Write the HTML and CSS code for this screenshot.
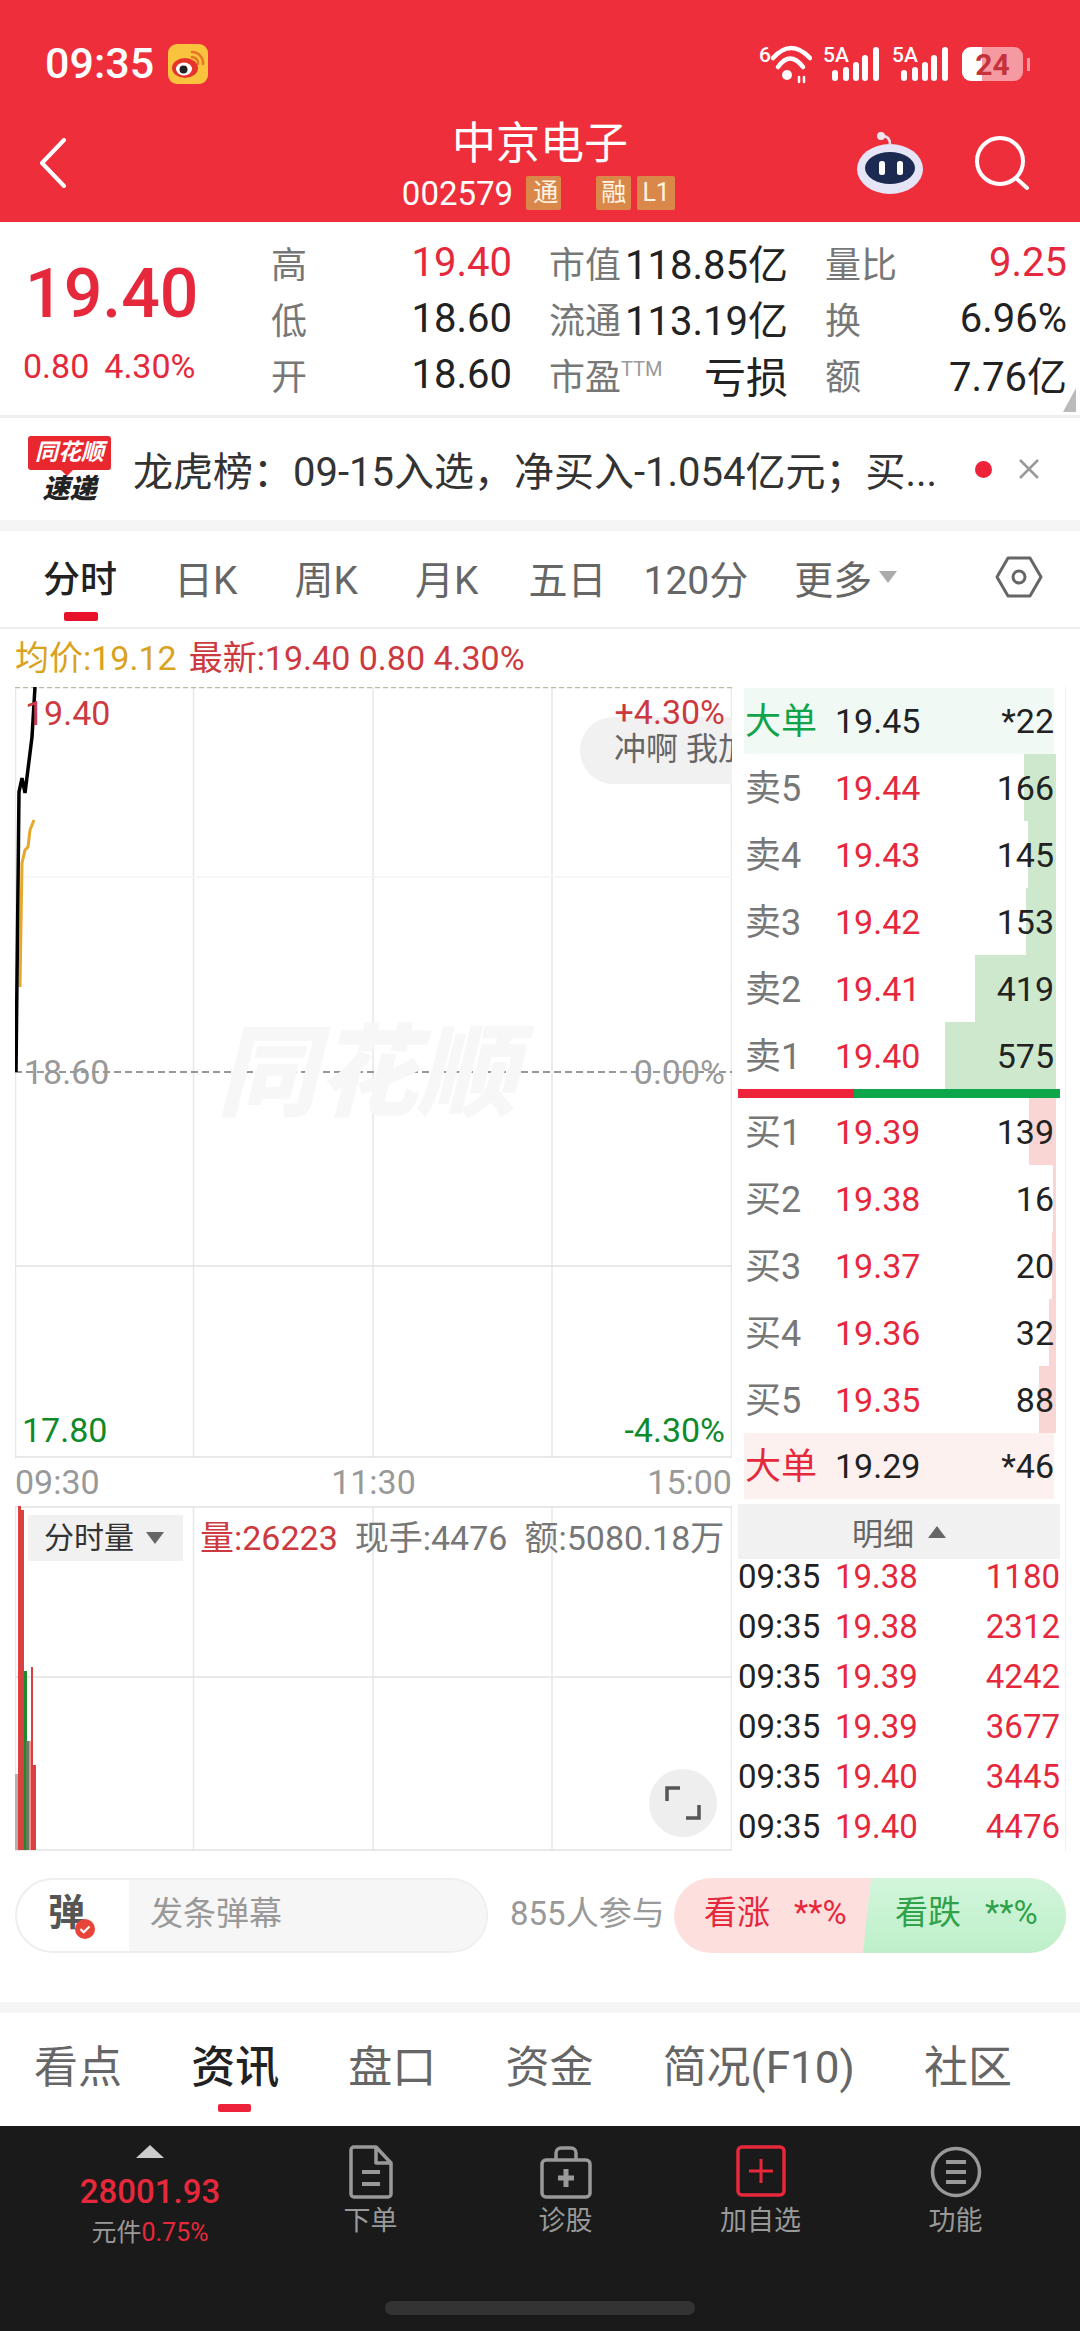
FILE: index.html
```html
<!DOCTYPE html>
<html>
<head>
    <title>中京电子</title>
    <link rel="stylesheet" href="styles.css">
</head>
<body>
<div class="app">
    <header class="header">
        <div class="status">
            <div class="status-left">
                <span class="clock">09:35</span>
                <svg class="weibo" viewBox="0 0 40 40">
                    <rect width="40" height="40" rx="9" fill="#f9c33d"/>
                    <ellipse cx="17" cy="24" rx="13" ry="10" fill="#e6342c"/>
                    <ellipse cx="16" cy="25" rx="8" ry="6.5" fill="#fff"/>
                    <circle cx="15.5" cy="25.5" r="4" fill="#222"/>
                    <path d="M24 8a11 11 0 0 1 11 12M24 13a6 6 0 0 1 6 7" fill="none" stroke="#e6742c" stroke-width="2.5" stroke-linecap="round"/>
                </svg>
            </div>
            <div class="status-right">
                <svg class="wifi" viewBox="0 0 54 42" fill="none" stroke="#fff" stroke-linecap="round">
                    <text x="1" y="20" class="net-text">6</text>
                    <path d="M15 16Q33 -4 52 16" stroke-width="4.5"/>
                    <path d="M20 25Q32 8 45 25" stroke-width="4.5"/>
                    <circle cx="29" cy="33" r="5" fill="#fff" stroke="none"/>
                    <path d="M41 35v5M46 35v5" stroke-width="2.5"/>
                </svg>
                <svg class="signal" viewBox="0 0 58 42" fill="#fff">
                    <text x="0" y="20" class="net-text">5A</text>
                    <rect x="9" y="28" width="6" height="11" rx="3"/>
                    <rect x="20" y="25" width="6" height="14" rx="3"/>
                    <rect x="30" y="20" width="6" height="19" rx="3"/>
                    <rect x="39" y="13" width="6" height="26" rx="3"/>
                    <rect x="50" y="5" width="6" height="34" rx="3"/>
                </svg>
                <svg class="signal" viewBox="0 0 58 42" fill="#fff">
                    <text x="0" y="20" class="net-text">5A</text>
                    <rect x="9" y="28" width="6" height="11" rx="3"/>
                    <rect x="20" y="25" width="6" height="14" rx="3"/>
                    <rect x="30" y="20" width="6" height="19" rx="3"/>
                    <rect x="39" y="13" width="6" height="26" rx="3"/>
                    <rect x="50" y="5" width="6" height="34" rx="3"/>
                </svg>
                <div class="battery">
                    <span class="battery-fill"></span>
                    <span class="battery-num">24</span>
                </div>
                <span class="battery-cap"></span>
            </div>
        </div>
        <div class="nav">
            <svg class="back" viewBox="0 0 30 50" fill="none" stroke="#fff" stroke-width="4" stroke-linecap="round" stroke-linejoin="round"><path d="M26 2 L4 25 L26 48"/></svg>
            <div class="title-box">
                <div class="title">中京电子</div>
                <div class="code-line">
                    <span class="code">002579</span>
                    <span class="tag tag-clip"><span>通</span></span>
                    <span class="tag tag-far">融</span>
                    <span class="tag tag-l1">L1</span>
                </div>
            </div>
            <svg class="robot" viewBox="0 0 68 62">
                <path d="M34 12q0-8-8-8" fill="none" stroke="#e8dcef" stroke-width="2.5"/>
                <circle cx="25" cy="4" r="4" fill="#f2e6ee"/>
                <ellipse cx="34" cy="37" rx="33" ry="25" fill="#e6e4f7"/>
                <ellipse cx="34" cy="36" rx="25" ry="16" fill="#1c2a52"/>
                <rect x="23" y="29" width="6" height="14" rx="2.5" fill="#fff"/>
                <rect x="41" y="29" width="6" height="14" rx="2.5" fill="#fff"/>
            </svg>
            <svg class="search" viewBox="0 0 56 56" fill="none" stroke="#fff" stroke-width="4" stroke-linecap="round"><circle cx="26" cy="26" r="23"/><path d="M43 44l10 9"/></svg>
        </div>
    </header>

    <section class="quote">
        <div class="last">
            <div class="last-price">19.40</div>
            <div class="last-change"><span>0.80</span><span>4.30%</span></div>
        </div>
        <div class="stats">
            <div class="stat"><span class="lbl">高</span><span class="val red">19.40</span></div>
            <div class="stat"><span class="lbl">市值</span><span class="val">118.85亿</span></div>
            <div class="stat"><span class="lbl">量比</span><span class="val red">9.25</span></div>
            <div class="stat"><span class="lbl">低</span><span class="val">18.60</span></div>
            <div class="stat"><span class="lbl">流通</span><span class="val">113.19亿</span></div>
            <div class="stat"><span class="lbl">换</span><span class="val">6.96%</span></div>
            <div class="stat"><span class="lbl">开</span><span class="val">18.60</span></div>
            <div class="stat"><span class="lbl">市盈<sup class="ttm">TTM</sup></span><span class="val val-big">亏损</span></div>
            <div class="stat"><span class="lbl">额</span><span class="val">7.76亿</span></div>
        </div>
        <span class="corner"></span>
    </section>

    <section class="news">
        <div class="news-logo">
            <div class="news-logo-top">同花顺</div>
            <div class="news-logo-bottom">速递</div>
        </div>
        <div class="news-text">龙虎榜：09-15入选，净买入-1.054亿元；买...</div>
        <span class="news-dot"></span>
        <svg class="news-close" viewBox="0 0 22 22" fill="none" stroke="#999" stroke-width="2.5"><path d="M2 2l18 18M20 2L2 20"/></svg>
    </section>

    <nav class="period-tabs">
        <span class="period active">分时</span>
        <span class="period">日K</span>
        <span class="period">周K</span>
        <span class="period">月K</span>
        <span class="period period-five">五日</span>
        <span class="period period-num">120分</span>
        <span class="period period-more">更多<i class="more-arrow"></i></span>
        <svg class="hex" viewBox="0 0 48 42" fill="none" stroke="#666" stroke-width="3"><path d="M13 2H35L46 21L35 40H13L2 21Z" stroke-linejoin="round"/><circle cx="24" cy="21" r="6"/></svg>
    </nav>

    <div class="legend">
        <span class="gold">均价:19.12</span>
        <span class="legend-red">最新:19.40 0.80 4.30%</span>
    </div>

    <div class="panels">
        <div class="charts">
            <div class="price-chart">
                <svg class="chart-svg" viewBox="0 0 717 771">
                    <path d="M0.5 0V771M178.5 0V771M358 0V771M537 0V771M716.5 0V771" stroke="#e8e8e8" stroke-width="1.5" fill="none"/>
                    <path d="M0 579H717M0 770H717" stroke="#e2e2e2" stroke-width="1.5" fill="none"/>
                    <path d="M0 190H717" stroke="#f5f5f5" stroke-width="1.5" fill="none"/>
                    <path d="M0 0.5H717" stroke="#bdb8a5" stroke-width="1.5" stroke-dasharray="5 3" fill="none"/>
                    <path d="M0 385H717" stroke="#777" stroke-width="1.5" stroke-dasharray="7 4" fill="none"/>
                    <path d="M5 300L7 176L10 163L13 160L15 143L19 133" stroke="#e3a82c" stroke-width="3" fill="none"/>
                    <path d="M1 385L4 105L7 91L10 106L17 50L20 0" stroke="#000" stroke-width="3.5" fill="none"/>
                </svg>
                <div class="watermark">同花顺</div>
                <div class="bullet">冲啊 我加</div>
                <span class="axis-label top-left chart-red">19.40</span>
                <span class="axis-label top-right chart-red">+4.30%</span>
                <span class="axis-label mid-left chart-grey">18.60</span>
                <span class="axis-label mid-right chart-grey">0.00%</span>
                <span class="axis-label low-left chart-green">17.80</span>
                <span class="axis-label low-right chart-green">-4.30%</span>
            </div>
            <div class="time-axis"><span>09:30</span><span>11:30</span><span>15:00</span></div>
            <div class="volume-chart">
                <svg class="chart-svg" viewBox="0 0 717 345">
                    <path d="M0.5 0V345M178.5 0V345M358 0V345M537 0V345M716.5 0V345" stroke="#e8e8e8" stroke-width="1.5" fill="none"/>
                    <path d="M0 1H717M0 171H717M0 344H717" stroke="#e2e2e2" stroke-width="1.5" fill="none"/>
                    <rect x="0" y="268" width="3" height="76" fill="#b5b0ae"/>
                    <rect x="3" y="0" width="3" height="344" fill="#d9403f"/>
                    <rect x="5" y="4" width="4" height="340" fill="#d9403f"/>
                    <rect x="9" y="165" width="3" height="179" fill="#1e8a2e"/>
                    <rect x="11" y="235" width="3" height="109" fill="#6c7a5e"/>
                    <rect x="14" y="235" width="2" height="109" fill="#f78a8a"/>
                    <rect x="16" y="161" width="2" height="183" fill="#d9403f"/>
                    <rect x="18" y="259" width="3" height="85" fill="#d9403f"/>
                </svg>
                <div class="vol-select">分时量<i class="vol-arrow"></i></div>
                <div class="vol-info">
                    <span class="chart-red">量:26223</span>
                    <span>现手:4476</span>
                    <span>额:5080.18万</span>
                </div>
                <div class="expand">
                    <svg viewBox="0 0 36 36" fill="none" stroke="#555" stroke-width="3.5"><path d="M2 16V3H15M34 20V33H21"/></svg>
                </div>
            </div>
        </div>

        <div class="book">
            <div class="book-big big-green"><span class="big-lbl">大单</span><span class="num">19.45</span><span class="qty">*22</span></div>
            <div class="book-row"><i class="depth depth-sell" style="width:32px"></i><span class="lbl">卖5</span><span class="num red">19.44</span><span class="qty">166</span></div>
            <div class="book-row"><i class="depth depth-sell" style="width:28px"></i><span class="lbl">卖4</span><span class="num red">19.43</span><span class="qty">145</span></div>
            <div class="book-row"><i class="depth depth-sell" style="width:30px"></i><span class="lbl">卖3</span><span class="num red">19.42</span><span class="qty">153</span></div>
            <div class="book-row"><i class="depth depth-sell" style="width:81px"></i><span class="lbl">卖2</span><span class="num red">19.41</span><span class="qty">419</span></div>
            <div class="book-row"><i class="depth depth-sell" style="width:111px"></i><span class="lbl">卖1</span><span class="num red">19.40</span><span class="qty">575</span></div>
            <div class="split"><span class="split-buy"></span><span class="split-sell"></span></div>
            <div class="book-row"><i class="depth depth-buy" style="width:27px"></i><span class="lbl">买1</span><span class="num red">19.39</span><span class="qty">139</span></div>
            <div class="book-row"><i class="depth depth-buy" style="width:3px"></i><span class="lbl">买2</span><span class="num red">19.38</span><span class="qty">16</span></div>
            <div class="book-row"><i class="depth depth-buy" style="width:4px"></i><span class="lbl">买3</span><span class="num red">19.37</span><span class="qty">20</span></div>
            <div class="book-row"><i class="depth depth-buy" style="width:7px"></i><span class="lbl">买4</span><span class="num red">19.36</span><span class="qty">32</span></div>
            <div class="book-row"><i class="depth depth-buy" style="width:17px"></i><span class="lbl">买5</span><span class="num red">19.35</span><span class="qty">88</span></div>
            <div class="book-big big-red"><span class="big-lbl">大单</span><span class="num">19.29</span><span class="qty">*46</span></div>
            <div class="detail-head">明细<i class="detail-arrow"></i></div>
            <div class="trades">
                <div class="trade"><span>09:35</span><span class="red">19.38</span><span class="red">1180</span></div>
                <div class="trade"><span>09:35</span><span class="red">19.38</span><span class="red">2312</span></div>
                <div class="trade"><span>09:35</span><span class="red">19.39</span><span class="red">4242</span></div>
                <div class="trade"><span>09:35</span><span class="red">19.39</span><span class="red">3677</span></div>
                <div class="trade"><span>09:35</span><span class="red">19.40</span><span class="red">3445</span></div>
                <div class="trade"><span>09:35</span><span class="red">19.40</span><span class="red">4476</span></div>
            </div>
        </div>
    </div>

    <div class="danmu-row">
        <div class="danmu-input">
            <div class="danmu-icon">弹<svg class="danmu-check" viewBox="0 0 20 20"><circle cx="10" cy="10" r="10" fill="#e8443a"/><path d="M5.5 10l3.2 3.2L14.5 7.5" fill="none" stroke="#fff" stroke-width="2.2"/></svg></div>
            <div class="danmu-hint">发条弹幕</div>
        </div>
        <span class="danmu-count">855人参与</span>
        <div class="vote">
            <span class="vote-bull">看涨<b>**%</b></span>
            <span class="vote-bear">看跌<b>**%</b></span>
        </div>
    </div>

    <nav class="info-tabs">
        <span>看点</span>
        <span class="active">资讯</span>
        <span>盘口</span>
        <span>资金</span>
        <span>简况(F10)</span>
        <span>社区</span>
    </nav>

    <footer class="footer">
        <div class="footer-items">
            <div class="index">
                <i class="index-arrow"></i>
                <div class="index-value">28001.93</div>
                <div class="index-sub">元件<span>0.75%</span></div>
            </div>
            <div class="action">
                <svg viewBox="0 0 44 54" fill="none" stroke="#999" stroke-width="3.5"><path d="M2 5a3 3 0 0 1 3-3H27L42 18V49a3 3 0 0 1-3 3H5a3 3 0 0 1-3-3Z M27 2V18H42" stroke-linejoin="round"/><path d="M13 27H31M13 39H31" stroke-width="4"/></svg>
                <span>下单</span>
            </div>
            <div class="action">
                <svg viewBox="0 0 52 54" fill="none" stroke="#999" stroke-width="3.5"><path d="M16 15V8a5 5 0 0 1 5-5H31a5 5 0 0 1 5 5V15"/><rect x="2" y="15" width="48" height="37" rx="4"/><path d="M26 24V42M18 33H34" stroke-width="5"/></svg>
                <span>诊股</span>
            </div>
            <div class="action">
                <svg viewBox="0 0 50 54" fill="none" stroke="#e8273a" stroke-width="3.5"><rect x="2" y="2" width="46" height="48" rx="4"/><path d="M25 14V38M13 26H37" stroke-width="3"/></svg>
                <span>加自选</span>
            </div>
            <div class="action">
                <svg viewBox="0 0 52 54" fill="none" stroke="#999" stroke-width="3.5"><circle cx="26" cy="27" r="23.5"/><path d="M16 17H36M16 27H36M16 37H36" stroke-width="4"/></svg>
                <span>功能</span>
            </div>
        </div>
        <div class="home-bar"></div>
    </footer>
</div>
</body>
</html>
```

FILE: styles.css
```css
* {
    margin: 0;
    padding: 0;
    box-sizing: border-box;
}

html, body {
    width: 1080px;
    height: 2331px;
    overflow: hidden;
}

body {
    background-color: #ffffff;
    font-family: Roboto, "Noto Sans CJK SC", sans-serif;
    color: #222222;
}

i {
    display: block;
    font-style: normal;
}

.app {
    width: 1080px;
    height: 2331px;
    display: flex;
    flex-direction: column;
}

.red {
    color: #e6283c;
}

.lbl {
    color: #777777;
}

/* Header */
.header {
    height: 222px;
    background-color: #ee2f3b;
    color: #ffffff;
}

.status {
    height: 110px;
    padding: 38px 50px 0 45px;
    display: flex;
    justify-content: space-between;
}

.status-left {
    display: flex;
    align-items: flex-start;
    gap: 14px;
}

.clock {
    font-size: 43px;
    line-height: 50px;
    font-weight: 500;
}

.weibo {
    width: 40px;
    height: 40px;
    margin-top: 6px;
}

.status-right {
    display: flex;
    align-items: flex-start;
    margin-top: 4px;
}

.wifi {
    width: 54px;
    height: 42px;
    margin-right: 11px;
}

.net-text {
    font-family: Roboto, sans-serif;
    font-size: 21px;
    font-weight: 500;
    fill: #ffffff;
    stroke: none;
}

.signal {
    width: 58px;
    height: 42px;
    margin-right: 11px;
}

.battery {
    width: 61px;
    height: 34px;
    margin: 5px 0 0 1px;
    border-radius: 9px;
    background-color: #f49aa0;
    overflow: hidden;
    position: relative;
    display: flex;
    align-items: center;
    justify-content: center;
}

.battery-fill {
    position: absolute;
    left: 0;
    top: 0;
    bottom: 0;
    width: 20px;
    background-color: #ffffff;
}

.battery-num {
    position: relative;
    font-size: 30px;
    font-weight: 700;
    color: #c5323c;
}

.battery-cap {
    width: 3px;
    height: 13px;
    margin: 16px 0 0 4px;
    background-color: #f49aa0;
}

.nav {
    height: 112px;
    padding: 0 50px 0 38px;
    display: flex;
    align-items: center;
    position: relative;
}

.back {
    width: 30px;
    height: 50px;
    margin-top: -6px;
}

.title-box {
    position: absolute;
    left: 0;
    right: 0;
    top: 8px;
    text-align: center;
}

.title {
    font-size: 44px;
    line-height: 52px;
}

.code-line {
    display: flex;
    justify-content: center;
    align-items: center;
    height: 36px;
    margin-top: 5px;
    margin-left: -3px;
}

.code {
    font-size: 33px;
    margin-right: 13px;
}

.tag {
    width: 35px;
    height: 34px;
    border-radius: 2px;
    background-color: #d9884a;
    color: #fff3e2;
    font-size: 25px;
    line-height: 34px;
    text-align: center;
}

.tag-clip span {
    margin-left: 4px;
}

.tag-far {
    margin-left: 35px;
}

.tag-l1 {
    margin-left: 6px;
    width: 38px;
}

.robot {
    width: 68px;
    height: 62px;
    margin-left: auto;
    margin-right: 50px;
    margin-top: -6px;
}

.search {
    width: 56px;
    height: 56px;
    margin-top: -6px;
}

/* Quote summary */
.quote {
    height: 196px;
    display: flex;
    position: relative;
    border-bottom: 3px solid #eeeeee;
}

.last {
    width: 271px;
    padding: 30px 0 0 25px;
}

.last-price {
    font-size: 68px;
    line-height: 84px;
    font-weight: 500;
    color: #e6283c;
}

.last-change {
    margin-top: 10px;
    margin-left: -2px;
    font-size: 34px;
    line-height: 40px;
    color: #e6283c;
    display: flex;
    gap: 15px;
}

.stats {
    display: grid;
    grid-template-columns: 241px 239px 242px;
    column-gap: 37px;
    grid-auto-rows: 56px;
    padding-top: 12px;
    font-size: 36px;
}

.stat {
    display: flex;
    justify-content: space-between;
    align-items: center;
    white-space: nowrap;
}

.val {
    font-size: 40px;
}

.val-big {
    font-size: 42px;
}

.ttm {
    font-size: 20px;
    line-height: 1;
    vertical-align: 14px;
    color: #999999;
}

.corner {
    position: absolute;
    right: 4px;
    bottom: 3px;
    border-style: solid;
    border-width: 0 0 24px 13px;
    border-color: transparent transparent #bbbbbb transparent;
}

/* News strip */
.news {
    height: 113px;
    padding-left: 28px;
    border-bottom: 11px solid #f5f5f5;
    display: flex;
    align-items: center;
}

.news-logo {
    width: 83px;
    text-align: center;
    position: relative;
}

.news-logo-top {
    height: 34px;
    background-color: #e8272e;
    border-radius: 3px;
    color: #ffffff;
    font-size: 23px;
    line-height: 34px;
    font-style: italic;
    font-weight: 700;
}

.news-logo-top::after {
    content: "";
    position: absolute;
    left: 33px;
    top: 34px;
    border-style: solid;
    border-width: 6px 6px 0 6px;
    border-color: #e8272e transparent transparent transparent;
}

.news-logo-bottom {
    margin-top: 5px;
    font-size: 27px;
    line-height: 28px;
    font-style: italic;
    font-weight: 900;
    color: #222222;
}

.news-text {
    margin-left: 22px;
    width: 835px;
    font-size: 40px;
    white-space: nowrap;
    color: #333333;
}

.news-dot {
    width: 17px;
    height: 17px;
    margin-left: 7px;
    border-radius: 50%;
    background-color: #ee2238;
}

.news-close {
    width: 22px;
    height: 22px;
    margin-left: 26px;
}

/* Period tabs */
.period-tabs {
    height: 98px;
    padding: 0 37px 4px 43px;
    border-bottom: 2px solid #eeeeee;
    display: flex;
    align-items: center;
    gap: 57px;
    font-size: 39px;
    color: #666666;
}

.period {
    position: relative;
    white-space: nowrap;
}

.period.active {
    font-size: 37px;
    color: #222222;
    font-weight: 500;
}

.period.active::after {
    content: "";
    position: absolute;
    left: 21px;
    bottom: -17px;
    width: 34px;
    height: 9px;
    border-radius: 2px;
    background-color: #e8112a;
}

.period-five {
    margin-left: -7px;
}

.period-num {
    margin-left: -20px;
}

.period-more {
    margin-left: -11px;
    display: flex;
    align-items: center;
}

.more-arrow {
    margin-left: 7px;
    border-style: solid;
    border-width: 12px 9px 0 9px;
    border-color: #aaaaaa transparent transparent transparent;
}

.hex {
    width: 48px;
    height: 42px;
    margin-left: auto;
}

/* Price legend */
.legend {
    height: 58px;
    padding: 0 0 5px 15px;
    display: flex;
    align-items: center;
    gap: 12px;
    font-size: 34px;
}

.gold {
    color: #d9a21f;
}

.legend-red {
    color: #cc3a3f;
}

/* Charts */
.panels {
    height: 1164px;
    padding-left: 15px;
    display: flex;
}

.charts {
    width: 717px;
    display: flex;
    flex-direction: column;
}

.price-chart {
    height: 771px;
    position: relative;
    overflow: hidden;
}

.chart-svg {
    display: block;
    width: 100%;
    height: 100%;
}

.watermark {
    position: absolute;
    left: 202px;
    top: 332px;
    font-size: 100px;
    line-height: 110px;
    font-weight: 900;
    font-style: italic;
    white-space: nowrap;
    color: #f7f7f7;
}

.axis-label {
    position: absolute;
    font-size: 34px;
    line-height: 36px;
}

.top-left {
    left: 10px;
    top: 8px;
}

.top-right {
    right: 7px;
    top: 7px;
}

.mid-left {
    left: 9px;
    top: 367px;
}

.mid-right {
    right: 7px;
    top: 367px;
}

.low-left {
    left: 7px;
    top: 725px;
}

.low-right {
    right: 7px;
    top: 725px;
}

.chart-red {
    color: #cc3a3f;
}

.chart-grey {
    color: #999999;
}

.chart-green {
    color: #0f8a2a;
}

.bullet {
    position: absolute;
    left: 565px;
    top: 30px;
    width: 180px;
    height: 67px;
    padding-left: 34px;
    border-radius: 34px 0 0 34px;
    background-color: #f1f1f1;
    font-size: 32px;
    line-height: 64px;
    white-space: nowrap;
    color: #666666;
}

.time-axis {
    height: 48px;
    display: flex;
    justify-content: space-between;
    align-items: center;
    font-size: 34px;
    color: #999999;
}

.volume-chart {
    height: 345px;
    position: relative;
}

.vol-select {
    position: absolute;
    left: 13px;
    top: 9px;
    width: 155px;
    height: 46px;
    padding-left: 16px;
    background-color: #f1f1f1;
    font-size: 30px;
    line-height: 44px;
    color: #333333;
    display: flex;
    align-items: center;
}

.vol-arrow {
    margin-left: 12px;
    border-style: solid;
    border-width: 12px 9px 0 9px;
    border-color: #666666 transparent transparent transparent;
}

.vol-info {
    position: absolute;
    left: 185px;
    top: 11px;
    display: flex;
    gap: 17px;
    font-size: 34px;
    line-height: 42px;
    white-space: nowrap;
    color: #777777;
}

.expand {
    position: absolute;
    left: 634px;
    top: 263px;
    width: 68px;
    height: 68px;
    border-radius: 50%;
    background-color: #eeeeee;
    display: flex;
    align-items: center;
    justify-content: center;
}

.expand svg {
    width: 36px;
    height: 36px;
}

/* Order book */
.book {
    width: 334px;
    border-right: 1px solid #eeeeee;
    padding-top: 1px;
    display: flex;
    flex-direction: column;
    font-size: 34px;
}

.book-big,
.book-row {
    margin: 0 11px 0 12px;
    padding-left: 1px;
    display: grid;
    grid-template-columns: 90px 1fr auto;
    align-items: center;
    position: relative;
}

.book-row .lbl,
.big-lbl {
    font-size: 36px;
    top: -3px;
}

.book-big {
    height: 66px;
}

.book-row {
    height: 67px;
}

.big-green {
    background-color: #f1f9f4;
}

.big-green .big-lbl {
    color: #0fa34a;
}

.big-red {
    background-color: #fdf1f0;
}

.big-red .big-lbl {
    color: #e6283c;
}

.num,
.qty,
.lbl,
.big-lbl {
    position: relative;
}

.qty {
    text-align: right;
}

.depth {
    position: absolute;
    right: -2px;
    top: 0;
    bottom: 0;
}

.depth-sell {
    background-color: #cde8cd;
}

.depth-buy {
    background-color: #f9d6d4;
}

.split {
    height: 9px;
    margin: 0 5px 0 6px;
    display: flex;
}

.split-buy {
    width: 116px;
    background-color: #ee2238;
}

.split-sell {
    flex: 1;
    background-color: #0ea64a;
}

.detail-head {
    height: 55px;
    margin: 5px 5px 0 6px;
    background-color: #f1f1f1;
    display: flex;
    align-items: center;
    justify-content: center;
    font-size: 31px;
    color: #666666;
}

.detail-arrow {
    margin-left: 14px;
    border-style: solid;
    border-width: 0 9px 12px 9px;
    border-color: transparent transparent #666666 transparent;
}

.trades {
    height: 292px;
    margin: 0 5px 0 6px;
    display: flex;
    flex-direction: column;
    justify-content: flex-end;
    overflow: hidden;
}

.trade {
    flex: none;
    height: 50px;
    display: grid;
    grid-template-columns: 97px 1fr auto;
    align-items: center;
    font-size: 33px;
    white-space: nowrap;
}

/* Danmu row */
.danmu-row {
    height: 162px;
    padding: 27px 14px 0 15px;
    border-bottom: 11px solid #f5f5f5;
    display: flex;
    align-items: flex-start;
}

.danmu-input {
    width: 473px;
    height: 75px;
    border: 2px solid #eeeeee;
    border-radius: 38px;
    overflow: hidden;
    display: flex;
}

.danmu-icon {
    width: 112px;
    padding-left: 31px;
    font-size: 37px;
    line-height: 68px;
    font-weight: 700;
    color: #555555;
    position: relative;
}

.danmu-check {
    position: absolute;
    left: 58px;
    top: 39px;
    width: 20px;
    height: 20px;
}

.danmu-hint {
    flex: 1;
    padding-left: 21px;
    background-color: #f6f6f6;
    font-size: 33px;
    line-height: 68px;
    color: #999999;
}

.danmu-count {
    width: 186px;
    padding-left: 22px;
    font-size: 33px;
    line-height: 72px;
    white-space: nowrap;
    color: #999999;
}

.vote {
    width: 392px;
    height: 75px;
    border-radius: 38px;
    overflow: hidden;
    background-color: #fde0de;
    display: flex;
    font-size: 33px;
}

.vote b {
    margin-left: 24px;
    font-weight: 400;
}

.vote-bull {
    width: 189px;
    padding-left: 30px;
    line-height: 70px;
    color: #e6283c;
    white-space: nowrap;
}

.vote-bear {
    flex: 1;
    padding-left: 32px;
    line-height: 70px;
    color: #2fa24a;
    white-space: nowrap;
    background: linear-gradient(#d3f5db, #bdf0ca);
    clip-path: polygon(8px 0, 100% 0, 100% 100%, 0 100%);
}

/* Info tabs */
.info-tabs {
    height: 113px;
    padding: 0 68px 11px 34px;
    display: flex;
    justify-content: space-between;
    align-items: center;
    font-size: 44px;
    color: #666666;
}

.info-tabs span {
    position: relative;
    white-space: nowrap;
}

.info-tabs .active {
    color: #222222;
    font-weight: 500;
}

.info-tabs .active::after {
    content: "";
    position: absolute;
    left: 27px;
    bottom: -16px;
    width: 33px;
    height: 8px;
    border-radius: 2px;
    background-color: #ee2238;
}

/* Footer */
.footer {
    flex: 1;
    background-color: #1a1a1a;
    color: #999999;
    display: flex;
    flex-direction: column;
}

.footer-items {
    height: 175px;
    padding: 19px 0 0 27px;
    display: grid;
    grid-template-columns: 246px repeat(4, 195px);
}

.index {
    display: flex;
    flex-direction: column;
    align-items: center;
}

.index-arrow {
    border-style: solid;
    border-width: 0 14px 13px 14px;
    border-color: transparent transparent #cccccc transparent;
}

.index-value {
    margin-top: 13px;
    font-size: 33px;
    line-height: 42px;
    font-weight: 500;
    color: #e6283c;
}

.index-sub {
    margin-top: 4px;
    font-size: 25px;
    line-height: 32px;
}

.index-sub span {
    color: #e6283c;
}

.action {
    display: flex;
    flex-direction: column;
    align-items: center;
}

.action svg {
    height: 54px;
    width: 52px;
}

.action span {
    margin-top: 4px;
    font-size: 27px;
    line-height: 36px;
}

.home-bar {
    width: 310px;
    height: 14px;
    margin: 0 auto;
    border-radius: 7px;
    background-color: #333333;
}
```
